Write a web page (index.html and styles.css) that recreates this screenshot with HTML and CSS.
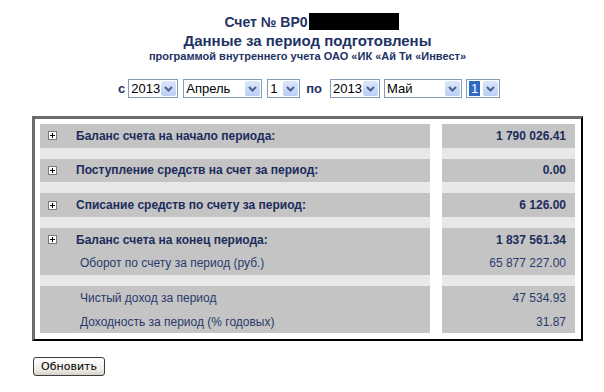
FILE: index.html
```html
<!DOCTYPE html>
<html lang="ru">
<head>
<meta charset="utf-8">
<title>Счет</title>
<link rel="stylesheet" href="styles.css">
</head>
<body>
<div class="wrap">
  <div class="head">
    <div class="acct">Счет № BP0<span class="redact"></span></div>
    <div class="title">Данные за период подготовлены</div>
    <div class="sub">программой внутреннего учета ОАО «ИК «Ай Ти «Инвест»</div>
  </div>

  <div class="period">
    <span class="lbl">с</span>
    <span class="sel w-year"><span class="val">2013</span><span class="arr"><svg width="9" height="6" viewBox="0 0 9 6"><path d="M1 1 L4.5 4.5 L8 1" fill="none" stroke="#4d6185" stroke-width="2"/></svg></span></span>
    <span class="sel w-mon"><span class="val">Апрель</span><span class="arr"><svg width="9" height="6" viewBox="0 0 9 6"><path d="M1 1 L4.5 4.5 L8 1" fill="none" stroke="#4d6185" stroke-width="2"/></svg></span></span>
    <span class="sel w-day"><span class="val">1</span><span class="arr"><svg width="9" height="6" viewBox="0 0 9 6"><path d="M1 1 L4.5 4.5 L8 1" fill="none" stroke="#4d6185" stroke-width="2"/></svg></span></span>
    <span class="lbl lbl-po">по</span>
    <span class="sel w-year2"><span class="val">2013</span><span class="arr"><svg width="9" height="6" viewBox="0 0 9 6"><path d="M1 1 L4.5 4.5 L8 1" fill="none" stroke="#4d6185" stroke-width="2"/></svg></span></span>
    <span class="sel w-mon2"><span class="val">Май</span><span class="arr"><svg width="9" height="6" viewBox="0 0 9 6"><path d="M1 1 L4.5 4.5 L8 1" fill="none" stroke="#4d6185" stroke-width="2"/></svg></span></span>
    <span class="sel w-day2"><span class="val"><span class="hl">1</span></span><span class="arr"><svg width="9" height="6" viewBox="0 0 9 6"><path d="M1 1 L4.5 4.5 L8 1" fill="none" stroke="#4d6185" stroke-width="2"/></svg></span></span>
  </div>

  <div class="box">
    <div class="grid">
      <div class="cell"><div class="line"><span class="plus"></span><span class="b">Баланс счета на начало периода:</span></div></div>
      <div class="cell num"><div class="line b">1 790 026.41</div></div>
      <div class="sep"></div><div class="sep"></div>

      <div class="cell"><div class="line"><span class="plus"></span><span class="b">Поступление средств на счет за период:</span></div></div>
      <div class="cell num"><div class="line b">0.00</div></div>
      <div class="sep"></div><div class="sep"></div>

      <div class="cell"><div class="line"><span class="plus"></span><span class="b">Списание средств по счету за период:</span></div></div>
      <div class="cell num"><div class="line b">6 126.00</div></div>
      <div class="sep"></div><div class="sep"></div>

      <div class="cell">
        <div class="line"><span class="plus"></span><span class="b">Баланс счета на конец периода:</span></div>
        <div class="line sublbl">Оборот по счету за период (руб.)</div>
      </div>
      <div class="cell num">
        <div class="line b">1 837 561.34</div>
        <div class="line reg">65 877 227.00</div>
      </div>
      <div class="sep"></div><div class="sep"></div>

      <div class="cell">
        <div class="line sublbl">Чистый доход за период</div>
        <div class="line sublbl">Доходность за период (% годовых)</div>
      </div>
      <div class="cell num">
        <div class="line reg">47 534.93</div>
        <div class="line reg">31.87</div>
      </div>
    </div>
  </div>
</div>

<div class="actions">
  <button class="btn" type="button">Обновить</button>
</div>
</body>
</html>
```

FILE: styles.css
```css
html, body {
  margin: 0;
  padding: 0;
  background: #ffffff;
}

body {
  font-family: "Liberation Sans", Arial, sans-serif;
  color: #1e2f5e;
}

.wrap {
  margin-left: 32px;
  width: 551px;
  padding-top: 13px;
}

.head {
  text-align: center;
  color: #1e3264;
  font-weight: bold;
}

.acct {
  font-size: 14px;
  line-height: 18px;
  height: 19px;
  padding-left: 8px;
}

.redact {
  display: inline-block;
  width: 90px;
  height: 17px;
  background: #000;
  vertical-align: top;
  margin-left: 1px;
  margin-top: 0;
}

.title {
  font-size: 15px;
  line-height: 18px;
}

.sub {
  font-size: 11px;
  line-height: 13px;
}

.period {
  display: flex;
  align-items: center;
  padding-left: 86px;
  margin-top: 16px;
  height: 19px;
}

.lbl {
  font-weight: bold;
  font-size: 13px;
  color: #1e3264;
  margin-right: 3px;
}

.lbl-po {
  margin-left: 1px;
  margin-right: 8px;
}

.sel {
  display: flex;
  align-items: stretch;
  box-sizing: border-box;
  height: 19px;
  border: 1px solid #7f9db9;
  background: #fff;
  margin-right: 5px;
  font-size: 13px;
  color: #000;
}

.w-year { width: 50px; }
.w-mon { width: 79px; }
.w-day { width: 33px; }
.w-year2 { width: 50px; margin-right: 4px; }
.w-mon2 { width: 78px; margin-right: 4px; }
.w-day2 { width: 34px; }

.val {
  flex: 1;
  padding-left: 2px;
  line-height: 17px;
  white-space: nowrap;
  overflow: hidden;
}

.hl {
  display: inline-block;
  background: #316ac5;
  color: #fff;
  padding: 0 2px;
  line-height: 15px;
  margin-top: 1px;
}

.arr {
  width: 15px;
  margin: 1px;
  display: flex;
  align-items: center;
  justify-content: center;
  background: linear-gradient(#dce7fd, #b9cdf8);
  border-radius: 2px;
}

.box {
  margin-top: 18px;
  box-sizing: border-box;
  width: 551px;
  border-top: 3px solid #6c6c6c;
  border-left: 3px solid #6c6c6c;
  border-right: 2px solid #000;
  border-bottom: 2px solid #000;
  padding: 5px 5px 6px 5px;
}

.grid {
  display: grid;
  grid-template-columns: 390px 133px;
  column-gap: 12px;
}

.cell {
  background: #c4c4c4;
  font-size: 12px;
}

.sep {
  background: #e8e8e8;
  height: 11.2px;
}

.line {
  display: flex;
  align-items: center;
  height: 23.5px;
  white-space: nowrap;
}

.b {
  font-weight: bold;
  color: #1c2c5c;
}

.plus {
  position: relative;
  box-sizing: border-box;
  width: 9px;
  height: 9px;
  border: 1px solid #7a7a7a;
  background: #fff;
  margin-left: 8px;
  margin-right: 19px;
}

.plus::before,
.plus::after {
  content: "";
  position: absolute;
  background: #000;
}

.plus::before {
  left: 1px;
  top: 3px;
  width: 5px;
  height: 1px;
}

.plus::after {
  left: 3px;
  top: 1px;
  width: 1px;
  height: 5px;
}

.sublbl {
  padding-left: 40px;
  color: #2a3a6c;
}

.num .line {
  justify-content: flex-end;
  padding-right: 9px;
}

.reg {
  color: #2a3a6c;
}

.actions {
  padding-left: 33px;
  margin-top: 15px;
}

.btn {
  box-sizing: border-box;
  width: 72px;
  height: 19px;
  padding: 0;
  font-family: "DejaVu Sans", Tahoma, sans-serif;
  font-size: 11px;
  color: #000;
  border: 1px solid #3c3c3c;
  border-radius: 3px;
  background: linear-gradient(#ffffff, #ecebe6 70%, #d6d0c5);
}
```
